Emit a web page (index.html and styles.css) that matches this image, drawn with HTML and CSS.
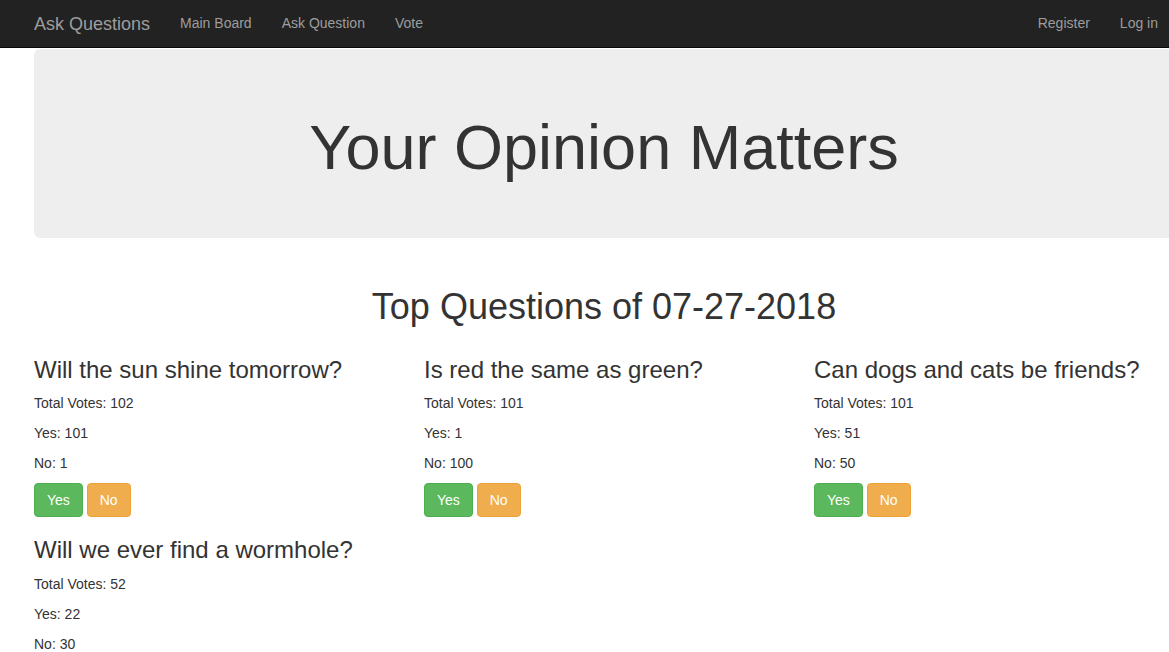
FILE: index.html
```html
<!DOCTYPE html>
<html lang="en">
<head>
<meta charset="utf-8">
<title>Ask Questions</title>
<link rel="stylesheet" href="styles.css">
</head>
<body>
<nav class="navbar">
  <div class="navbar-inner">
    <a class="brand" href="#">Ask Questions</a>
    <ul class="nav">
      <li><a href="#">Main Board</a></li>
      <li><a href="#">Ask Question</a></li>
      <li><a href="#">Vote</a></li>
    </ul>
    <ul class="nav nav-right">
      <li><a href="#">Register</a></li>
      <li><a href="#">Log in</a></li>
    </ul>
  </div>
</nav>
<div class="container">
  <div class="jumbotron">
    <h1 class="hero-title">Your Opinion Matters</h1>
  </div>
  <h1 class="section-title">Top Questions of 07-27-2018</h1>
  <div class="row">
    <div class="col">
      <h3>Will the sun shine tomorrow?</h3>
      <p>Total Votes: 102</p>
      <p>Yes: 101</p>
      <p>No: 1</p>
      <div class="actions"><button class="btn btn-success">Yes</button> <button class="btn btn-warning">No</button></div>
    </div>
    <div class="col">
      <h3>Is red the same as green?</h3>
      <p>Total Votes: 101</p>
      <p>Yes: 1</p>
      <p>No: 100</p>
      <div class="actions"><button class="btn btn-success">Yes</button> <button class="btn btn-warning">No</button></div>
    </div>
    <div class="col">
      <h3>Can dogs and cats be friends?</h3>
      <p>Total Votes: 101</p>
      <p>Yes: 51</p>
      <p>No: 50</p>
      <div class="actions"><button class="btn btn-success">Yes</button> <button class="btn btn-warning">No</button></div>
    </div>
    <div class="col">
      <h3>Will we ever find a wormhole?</h3>
      <p>Total Votes: 52</p>
      <p>Yes: 22</p>
      <p>No: 30</p>
      <div class="actions"><button class="btn btn-success">Yes</button> <button class="btn btn-warning">No</button></div>
    </div>
  </div>
</div>
</body>
</html>
```
FILE: styles.css
```css
* { box-sizing: border-box; }
html, body { margin: 0; padding: 0; }
body {
  font-family: "Liberation Sans", Arial, Helvetica, sans-serif;
  font-size: 14px;
  line-height: 20px;
  color: #333;
  background: #fff;
  overflow-x: hidden;
}
a { text-decoration: none; }

.navbar {
  height: 48px;
  background: #222;
  border-bottom: 1px solid #080808;
  overflow: hidden;
}
.navbar-inner {
  display: flex;
  width: 1173px;
  padding-left: 19px;
  height: 47px;
}
.brand {
  display: block;
  padding: 14px 15px;
  font-size: 18px;
  line-height: 20px;
  color: #9d9d9d;
}
.nav {
  display: flex;
  list-style: none;
  margin: 0;
  padding: 0;
}
.nav a {
  display: block;
  padding: 13px 15px;
  line-height: 20px;
  color: #9d9d9d;
}
.nav-right { margin-left: auto; }

.container {
  width: 1170px;
  margin-left: 19px;
  padding: 0 15px;
}
.jumbotron {
  margin-top: 1px;
  background: #eee;
  border-radius: 6px;
  padding: 64px 60px 56px;
  margin-bottom: 0;
}
.hero-title {
  margin: 0;
  font-size: 63px;
  line-height: 1.1;
  font-weight: 500;
  text-align: center;
}
.section-title {
  margin: 49px 0 10px;
  font-size: 36px;
  line-height: 1.1;
  font-weight: 500;
  text-align: center;
}
.row {
  display: grid;
  grid-template-columns: repeat(3, 390px);
  margin: 0 -15px;
}
.col { padding: 0 15px; }
h3 {
  margin: 20px 0 10px;
  font-size: 24px;
  line-height: 1.1;
  font-weight: 500;
}
p { margin: 0 0 10px; }
.btn {
  display: inline-block;
  font-family: inherit;
  font-size: 14px;
  line-height: 20px;
  padding: 6px 12px;
  border: 1px solid transparent;
  border-radius: 4px;
  color: #fff;
  cursor: pointer;
  margin: 0;
}
.btn-success { background: #5cb85c; border-color: #4cae4c; }
.btn-warning { background: #f0ad4e; border-color: #eea236; }
```
